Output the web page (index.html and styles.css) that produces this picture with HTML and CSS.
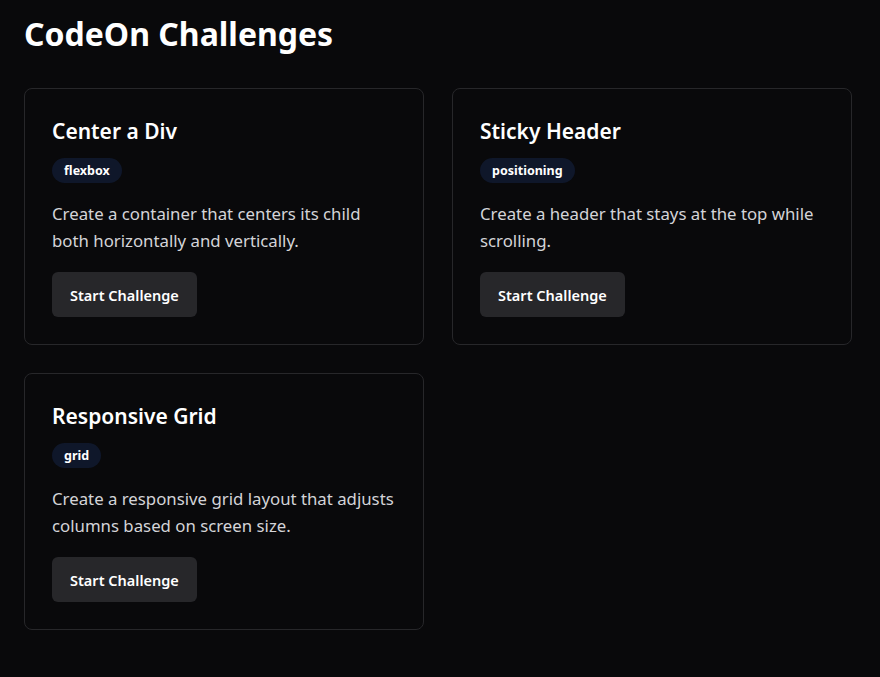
FILE: index.html
```html
<!DOCTYPE html>
<html lang="en">
<head>
<meta charset="utf-8">
<title>CodeOn Challenges</title>
<link rel="stylesheet" href="styles.css">
</head>
<body>
<main class="page">
  <h1 class="page-title">CodeOn Challenges</h1>
  <section class="grid">
    <article class="card">
      <h2 class="card-title">Center a Div</h2>
      <span class="tag">flexbox</span>
      <p class="card-desc">Create a container that centers its child both horizontally and vertically.</p>
      <button class="btn">Start Challenge</button>
    </article>
    <article class="card">
      <h2 class="card-title">Sticky Header</h2>
      <span class="tag">positioning</span>
      <p class="card-desc">Create a header that stays at the top while scrolling.</p>
      <button class="btn">Start Challenge</button>
    </article>
    <article class="card">
      <h2 class="card-title">Responsive Grid</h2>
      <span class="tag">grid</span>
      <p class="card-desc">Create a responsive grid layout that adjusts columns based on screen size.</p>
      <button class="btn">Start Challenge</button>
    </article>
  </section>
</main>
</body>
</html>
```
FILE: styles.css
```css
* { box-sizing: border-box; }
html, body {
  margin: 0;
  background: #09090b;
  color: #ffffff;
  font-family: "Noto Sans", sans-serif;
}
.page {
  padding: 14px 24px 24px;
}
.page-title {
  margin: 0 0 34px;
  font-size: 32px;
  font-weight: 700;
  line-height: 40px;
}
.grid {
  display: grid;
  grid-template-columns: 400px 400px;
  gap: 28px;
}
.card {
  display: flex;
  flex-direction: column;
  align-items: flex-start;
  padding: 27px 22px 27px 27px;
  border: 1px solid #27272a;
  border-radius: 8px;
  background: #09090b;
}
.card-title {
  margin: 0 0 12px;
  font-size: 21px;
  font-weight: 600;
  line-height: 30px;
}
.tag {
  display: inline-block;
  padding: 0 12px;
  height: 25px;
  line-height: 25px;
  border-radius: 999px;
  background: #0f172a;
  color: #ffffff;
  font-size: 12.5px;
  font-weight: 700;
}
.card-desc {
  margin: 17px 0 18px;
  color: #d4d4d8;
  font-size: 16.8px;
  line-height: 27px;
}
.btn {
  height: 45px;
  padding: 0 18px;
  border: 0;
  border-radius: 6px;
  background: #27272a;
  color: #ffffff;
  font-family: inherit;
  font-size: 14.5px;
  font-weight: 600;
}
```
